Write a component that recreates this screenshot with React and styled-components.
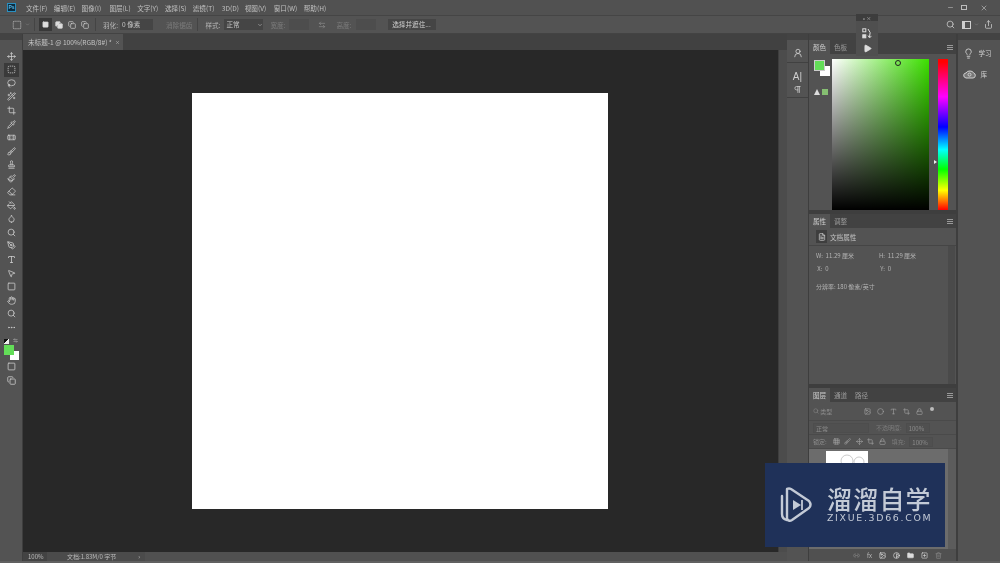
import React from "react";
import styled, { createGlobalStyle } from "styled-components";
import {
  Move, SquareDashed, Lasso, Wand2, Crop, Pipette, Bandage, Brush, Stamp, Paintbrush, Eraser, PaintBucket, Droplet,
  Search, PenTool, Type, MousePointer2, Square, Hand, Ellipsis, Minus, X, Share, ArrowLeftRight, Lightbulb,
  FileText, Lock, Link2, Image, Folder, Trash2, Play, Circle, Grid3x3, Contrast, Copy, UserRound, Pilcrow, ChevronDown, SquarePlus
} from "lucide-react";

const Global = createGlobalStyle`
  html, body { margin: 0; padding: 0; background: #535353; overflow: hidden; }
  #root { width: 1000px; height: 563px; }
  * { box-sizing: border-box; }
`;

const Window = styled.div`
  position: relative;
  width: 1000px;
  height: 563px;
  display: flex;
  flex-direction: column;
  overflow: hidden;
  background: #535353;
  color: #c4c4c4;
  font: 6.6px "Noto Sans CJK SC", "Liberation Sans", sans-serif;
  filter: blur(0.3px);
`;
const MenuBar = styled.div`
  height: 16px;
  flex: none;
  display: flex;
  align-items: center;
  padding: 0 0 0 7px;
  background: #515151;
  border-bottom: 1px solid #454545;
`;
const Logo = styled.div`
  width: 9px;
  height: 9px;
  margin-right: 10px;
  border: 1px solid #2a8fc0;
  background: #0d2c3f;
  color: #58b8e8;
  font: bold 5px "Liberation Sans", sans-serif;
  line-height: 7px;
  text-align: center;
`;
const MenuItem = styled.span`
  width: ${p => p.$w || 27.8}px;
  flex: none;
  white-space: nowrap;
  color: #c0c0c0;
`;
const WindowControls = styled.div`
  margin-left: auto;
  display: flex;
  align-items: center;
  padding-right: 12px;
  color: #bbb;
`;
const MaxBox = styled.div`
  width: 6px;
  height: 5px;
  margin: 0 13px 0 7.5px;
  border: 1px solid #bbb;
`;
const OptionsBar = styled.div`
  height: 18px;
  flex: none;
  display: flex;
  align-items: center;
  padding-left: 12px;
  background: #535353;
  border-bottom: 1px solid #434343;
`;
const ToolCaret = styled.div`
  display: flex;
  margin-left: 3px;
  color: #999;
`;
const Divider = styled.div`
  width: 1px;
  height: 13px;
  flex: none;
  background: #444;
  margin: 0 ${p => p.$m || 5}px;
`;
const ModeButton = styled.div`
  width: 13px;
  height: 13px;
  flex: none;
  display: flex;
  align-items: center;
  justify-content: center;
  background: ${p => (p.$active ? "#383838" : "transparent")};
  color: #d4d4d4;
`;
const Label = styled.span`
  flex: none;
  white-space: nowrap;
  color: ${p => (p.$dim ? "#7c7c7c" : "#b8b8b8")};
  margin-left: ${p => p.$ml || 0}px;
`;
const Field = styled.div`
  width: ${p => p.$w}px;
  height: 11px;
  flex: none;
  margin-left: ${p => p.$ml || 2}px;
  padding-left: 2px;
  line-height: 11px;
  background: ${p => (p.$dim ? "#4d4d4d" : "#454545")};
  color: #c8c8c8;
  display: flex;
  align-items: center;
  justify-content: space-between;
`;
const ActionButton = styled.div`
  margin-left: 12px;
  width: 48px;
  height: 11px;
  line-height: 11px;
  text-align: center;
  background: #454545;
  color: #d0d0d0;
`;
const OptionsRight = styled.div`
  margin-left: auto;
  display: flex;
  align-items: center;
  padding-right: 7px;
  color: #cfcfcf;
`;
const RightIcon = styled.div`
  display: flex;
  margin-left: ${p => p.$ml || 0}px;
`;
const Workspace = styled.div`
  width: 9px;
  height: 8px;
  border: 1px solid #cfcfcf;
  border-left-width: 3px;
`;
const SwapIcon = styled.div`
  display: flex;
  margin-left: 9px;
  color: #8c8c8c;
`;
const Main = styled.div`
  flex: 1;
  min-height: 0;
  display: flex;
`;
const Toolbar = styled.div`
  width: 23px;
  flex: none;
  display: flex;
  flex-direction: column;
  align-items: center;
  background: #535353;
  border-right: 1px solid #3e3e3e;
`;
const Grip = styled.div`
  align-self: stretch;
  height: 6px;
  flex: none;
  margin-bottom: ${p => p.$mb || 0}px;
  background: #434343;
`;
const ToolSlot = styled.div`
  width: 15px;
  height: 13.55px;
  flex: none;
  display: flex;
  align-items: center;
  justify-content: center;
  background: ${p => (p.$active ? "#3a3a3a" : "transparent")};
  color: #d2d2d2;
`;
const Swatches = styled.div`
  position: relative;
  width: 17px;
  height: 25px;
  flex: none;
  margin: 2px 0 -1px 1px;
`;
const DefaultColors = styled.div`
  position: absolute;
  left: 1px;
  top: 3px;
  width: 5px;
  height: 5px;
  background: linear-gradient(135deg, #111 50%, #eee 50%);
`;
const SwapMark = styled.div`
  position: absolute;
  left: 10px;
  top: 2px;
  color: #ccc;
  display: flex;
`;
const Fg = styled.div`
  position: absolute;
  left: 1px;
  top: 9px;
  width: 10px;
  height: 10px;
  background: #63dd58;
  z-index: 1;
`;
const Bg = styled.div`
  position: absolute;
  left: 7px;
  top: 15px;
  width: 9px;
  height: 9px;
  background: #fff;
`;
const Center = styled.div`
  flex: 1;
  min-width: 0;
  display: flex;
  flex-direction: column;
  background: #282828;
`;
const TabStrip = styled.div`
  height: 16px;
  flex: none;
  display: flex;
  background: #414141;
`;
const DocTab = styled.div`
  width: 100px;
  padding: 0 3px 0 5px;
  display: flex;
  align-items: center;
  justify-content: space-between;
  background: #535353;
  color: #c6c6c6;
  white-space: nowrap;
`;
const CanvasRow = styled.div`
  flex: 1;
  min-height: 0;
  display: flex;
`;
const Canvas = styled.div`
  flex: 1;
  display: flex;
  align-items: center;
  justify-content: center;
  background: #282828;
`;
const Paper = styled.div`
  width: 416px;
  height: 416px;
  margin-right: 1px;
  background: #fff;
`;
const VScroll = styled.div`
  width: 9px;
  flex: none;
  background: #4c4c4c;
  border-left: 1px solid #3e3e3e;
`;
const StatusBar = styled.div`
  height: 9px;
  flex: none;
  display: flex;
  align-items: center;
  background: #505050;
  color: #bcbcbc;
  font-size: 6px;
`;
const Zoom = styled.div`
  width: 24px;
  height: 100%;
  padding-left: 5px;
  line-height: 9px;
  background: #434343;
`;
const DocInfo = styled.div`
  width: 98px;
  height: 100%;
  padding-left: 20px;
  line-height: 9px;
  display: flex;
  justify-content: space-between;
  padding-right: 5px;
  background: #4b4b4b;
`;
const BottomEdge = styled.div`
  height: 2px;
  flex: none;
  background: #606060;
`;
const Dock = styled.div`
  width: 213px;
  flex: none;
  display: flex;
  background: #3e3e3e;
`;
const IconColumn = styled.div`
  width: 21px;
  flex: none;
  display: flex;
  flex-direction: column;
  align-items: center;
  margin-right: 1px;
  background: #535353;
`;
const DockIcon = styled.div`
  height: ${p => p.$h || 13}px;
  display: flex;
  align-items: center;
  justify-content: center;
  color: #d0d0d0;
  flex: none;
  font: 10px "Liberation Sans", sans-serif;
`;
const DockGroup = styled.div`
  align-self: stretch;
  display: flex;
  flex-direction: column;
  align-items: center;
  padding: 6px 0 2px;
  border-bottom: 1px solid #414141;
`;
const PanelColumn = styled.div`
  width: 147px;
  flex: none;
  display: flex;
  flex-direction: column;
  gap: 4px;
`;
const Panel = styled.div`
  height: ${p => p.$h}px;
  flex: ${p => (p.$grow ? 1 : "none")};
  display: flex;
  flex-direction: column;
  background: #535353;
  overflow: hidden;
`;
const PanelHead = styled.div`
  height: 14px;
  flex: none;
  display: flex;
  align-items: stretch;
  background: #424242;
  padding-right: 3px;
`;
const PanelTab = styled.div`
  width: ${p => p.$w || 21}px;
  line-height: 14px;
  text-align: center;
  background: ${p => (p.$active ? "#535353" : "transparent")};
  color: ${p => (p.$active ? "#d0d0d0" : "#9a9a9a")};
`;
const PanelMenu = styled.div`
  margin: auto 0 auto auto;
  width: 6px;
  height: 5px;
  border-top: 1px solid #999;
  border-bottom: 1px solid #999;
  background: linear-gradient(#999, #999) center / 100% 1px no-repeat;
`;
const ColorBody = styled.div`
  flex: 1;
  display: flex;
  padding: 5px 7px 3px 5px;
`;
const ColorSide = styled.div`
  width: 19px;
  flex: none;
  display: flex;
  flex-direction: column;
  gap: 13px;
`;
const ColorChips = styled.div`
  position: relative;
  width: 16px;
  height: 17px;
`;
const ChipFg = styled.div`
  position: absolute;
  left: 0;
  top: 1px;
  width: 11px;
  height: 11px;
  background: #63dd58;
  border: 1px solid #ccc;
  z-index: 1;
`;
const ChipBg = styled.div`
  position: absolute;
  right: 0;
  bottom: 0;
  width: 10px;
  height: 10px;
  background: #fff;
`;
const Warning = styled.div`
  display: flex;
  align-items: center;
  gap: 2px;
`;
const Triangle = styled.div`
  width: 0;
  height: 0;
  border-left: 3px solid transparent;
  border-right: 3px solid transparent;
  border-bottom: 6px solid #ddd;
`;
const GamutChip = styled.div`
  width: 6px;
  height: 6px;
  background: #86bf72;
`;
const Spectrum = styled.div`
  position: relative;
  width: 97px;
  height: 151px;
  flex: none;
  margin-left: -1px;
  background: linear-gradient(to top, #000, rgba(0, 0, 0, 0)), linear-gradient(to right, #fff, #3ce000);
`;
const Picker = styled.div`
  position: absolute;
  left: 63px;
  top: 1px;
  width: 6px;
  height: 6px;
  border-radius: 50%;
  border: 1px solid #222;
`;
const HueWrap = styled.div`
  position: relative;
  margin-left: 9px;
  width: 10px;
  height: 151px;
  flex: none;
  background: linear-gradient(to bottom, #f00 2%, #f0f 25%, #00f 45%, #0ff 60%, #0f0 73%, #ff0 87%, #f00 100%);
`;
const HueMark = styled.div`
  position: absolute;
  left: -4px;
  top: 101px;
  width: 0;
  height: 0;
  border-top: 2px solid transparent;
  border-bottom: 2px solid transparent;
  border-left: 3px solid #eee;
`;
const DocRow = styled.div`
  height: 18px;
  flex: none;
  display: flex;
  align-items: center;
  gap: 3px;
  padding-left: 7px;
  border-bottom: 1px solid #454545;
`;
const DocIcon = styled.div`
  width: 11px;
  height: 13px;
  display: flex;
  align-items: center;
  justify-content: center;
  background: #3e3e3e;
  color: #ddd;
`;
const PropsBody = styled.div`
  flex: 1;
  display: flex;
  min-height: 0;
`;
const PropsContent = styled.div`
  flex: 1;
  display: flex;
  flex-direction: column;
  padding: 3px 0 0 7px;
  color: #b4b4b4;
  font-size: 6px;
`;
const PropsRow = styled.div`
  height: 13px;
  display: grid;
  grid-template-columns: 63px 1fr;
  align-items: center;
`;
const Resolution = styled.div`
  margin-top: 7px;
`;
const ThinScroll = styled.div`
  width: 7px;
  flex: none;
  margin-right: 1px;
  background: #4a4a4a;
`;
const LayerRow = styled.div`
  height: ${p => p.$h || 14}px;
  flex: none;
  display: flex;
  align-items: center;
  padding: 0 4px;
  color: #8c8c8c;
  font-size: 6px;
  border-bottom: 1px solid #4a4a4a;
`;
const FilterGap = styled.div`
  display: flex;
  gap: ${p => p.$gap || 4.5}px;
  margin-left: ${p => p.$ml || 0}px;
  color: #a6a6a6;
  align-items: center;
`;
const FilterDot = styled.div`
  width: 4px;
  height: 4px;
  margin: -4px 0 0 7px;
  border-radius: 50%;
  background: #bbb;
`;
const LayerField = styled.div`
  width: ${p => p.$w}px;
  height: 10px;
  margin-left: ${p => p.$ml || 0}px;
  padding-left: 2px;
  line-height: 9px;
  border: 1px solid #4d4d4d;
  background: #505050;
  flex: none;
`;
const LayerList = styled.div`
  flex: 1;
  min-height: 0;
  display: flex;
  background: #636363;
`;
const LayerContent = styled.div`
  flex: 1;
  padding: 2px 0 0 17px;
  background: #6c6c6c;
`;
const Thumb = styled.div`
  width: 42px;
  height: 40px;
  background: #fff;
`;
const LayerScroll = styled.div`
  width: 8px;
  flex: none;
  background: #5c5c5c;
`;
const LayerFoot = styled.div`
  height: 12px;
  flex: none;
  display: flex;
  align-items: center;
  justify-content: flex-end;
  gap: 7px;
  padding-right: 14px;
  color: #bdbdbd;
  font-size: 6px;
  background: #505050;
`;
const LearnGap = styled.div`
  width: 2px;
  flex: none;
  background: #3e3e3e;
`;
const LearnColumn = styled.div`
  width: 43px;
  flex: none;
  display: flex;
  flex-direction: column;
  background: #535353;
`;
const LearnItem = styled.div`
  height: 21px;
  display: flex;
  align-items: center;
  gap: 3px;
  padding-left: 5px;
  color: #d0d0d0;
`;
const Floating = styled.div`
  position: absolute;
  left: 856px;
  top: 14px;
  width: 22px;
  height: 42px;
  display: flex;
  flex-direction: column;
  align-items: center;
  background: #4f4f4f;
  color: #ddd;
  z-index: 3;
`;
const FloatHead = styled.div`
  align-self: stretch;
  height: 7px;
  margin-bottom: 4.5px;
  background: #3d3d3d;
  color: #bbb;
  font-size: 5px;
  line-height: 7px;
  text-align: center;
  flex: none;
`;
const FloatItem = styled.div`
  height: 15px;
  display: flex;
  align-items: center;
  flex: none;
`;
const Badge = styled.div`
  position: absolute;
  left: 765px;
  top: 463px;
  width: 180px;
  height: 84px;
  display: flex;
  align-items: center;
  padding-left: 14px;
  gap: 14px;
  background: #1f3159;
  color: #c3cad6;
  z-index: 4;
`;
const BadgeText = styled.div`
  display: flex;
  flex-direction: column;
  margin-top: -1px;
`;
const BadgeTitle = styled.div`
  font: 500 25px/27px "Noto Sans CJK SC", sans-serif;
  letter-spacing: 1.2px;
  white-space: nowrap;
`;
const BadgeUrl = styled.div`
  font: 400 9.4px/12px "DejaVu Sans", sans-serif;
  letter-spacing: 1.7px;
  white-space: nowrap;
`;

const toolIcons = [Move, SquareDashed, Lasso, Wand2, Crop, Pipette, Bandage, Brush, Stamp, Paintbrush, Eraser, PaintBucket, Droplet, Search, PenTool, Type, MousePointer2, Square, Hand, Search, Ellipsis];
const menus = [["文件(F)"], ["编辑(E)"], ["图像(I)"], ["图层(L)"], ["文字(Y)"], ["选择(S)"], ["滤镜(T)", 29], ["3D(D)", 23], ["视图(V)", 29], ["窗口(W)", 30], ["帮助(H)"]];

export default function App() {
  return (
    <Window>
      <Global />
      <MenuBar>
        <Logo>Ps</Logo>
        {menus.map(([t, w]) => <MenuItem key={t} $w={w}>{t}</MenuItem>)}
        <WindowControls>
          <Minus size={7} />
          <MaxBox />
          <X size={8} />
        </WindowControls>
      </MenuBar>
      <OptionsBar>
        <SquareDashed size={10} color="#c8c8c8" />
        <ToolCaret><ChevronDown size={5} /></ToolCaret>
        <Divider $m={4} />
        <ModeButton $active><Square size={7} fill="#ddd" /></ModeButton>
        <ModeButton><Copy size={8} fill="#ddd" /></ModeButton>
        <ModeButton><Copy size={8} /></ModeButton>
        <ModeButton><Copy size={8} /></ModeButton>
        <Divider $m={4} />
        <Label $ml={3}>羽化:</Label>
        <Field $w={33}>0 像素</Field>
        <Label $dim $ml={13}>消除锯齿</Label>
        <Divider />
        <Label $ml={2}>样式:</Label>
        <Field $w={39} $ml={4}>正常<ChevronDown size={6} /></Field>
        <Label $dim $ml={7}>宽度:</Label>
        <Field $w={20} $dim $ml={4} />
        <SwapIcon><ArrowLeftRight size={8} /></SwapIcon>
        <Label $dim $ml={10}>高度:</Label>
        <Field $w={20} $dim $ml={4} />
        <ActionButton>选择并遮住...</ActionButton>
        <OptionsRight>
          <RightIcon><Search size={9} /></RightIcon>
          <RightIcon $ml={6.5}><Workspace /></RightIcon>
          <RightIcon $ml={3}><ChevronDown size={5} color="#999" /></RightIcon>
          <RightIcon $ml={5.5}><Share size={9} /></RightIcon>
        </OptionsRight>
      </OptionsBar>
      <Main>
        <Toolbar>
          <Grip $mb={9.5} />
          {toolIcons.map((I, i) => (
            <ToolSlot key={i} $active={i === 1}><I size={9} strokeWidth={2} /></ToolSlot>
          ))}
          <Swatches>
            <DefaultColors />
            <SwapMark><ArrowLeftRight size={5} /></SwapMark>
            <Fg /><Bg />
          </Swatches>
          <ToolSlot><Square size={9} /></ToolSlot>
          <ToolSlot><Copy size={9} /></ToolSlot>
        </Toolbar>
        <Center>
          <TabStrip>
            <DocTab>未标题-1 @ 100%(RGB/8#) * <X size={5} /></DocTab>
          </TabStrip>
          <CanvasRow>
            <Canvas><Paper /></Canvas>
            <VScroll />
          </CanvasRow>
          <StatusBar>
            <Zoom>100%</Zoom>
            <DocInfo>文档:1.83M/0 字节<span>›</span></DocInfo>
          </StatusBar>
        </Center>
        <Dock>
          <IconColumn>
            <Grip />
            <DockGroup>
              <DockIcon $h={14}><UserRound size={10} /></DockIcon>
            </DockGroup>
            <DockGroup>
              <DockIcon $h={14}>A|</DockIcon>
              <DockIcon $h={12}><Pilcrow size={9} /></DockIcon>
            </DockGroup>
          </IconColumn>
          <PanelColumn>
            <Panel $h={176}>
              <Grip />
              <PanelHead>
                <PanelTab $active>颜色</PanelTab>
                <PanelTab>色板</PanelTab>
                <PanelMenu />
              </PanelHead>
              <ColorBody>
                <ColorSide>
                  <ColorChips><ChipFg /><ChipBg /></ColorChips>
                  <Warning><Triangle /><GamutChip /></Warning>
                </ColorSide>
                <Spectrum><Picker /></Spectrum>
                <HueWrap><HueMark /></HueWrap>
              </ColorBody>
            </Panel>
            <Panel $h={170}>
              <PanelHead>
                <PanelTab $active>属性</PanelTab>
                <PanelTab>调整</PanelTab>
                <PanelMenu />
              </PanelHead>
              <DocRow>
                <DocIcon><FileText size={8} /></DocIcon>
                文档属性
              </DocRow>
              <PropsBody>
                <PropsContent>
                  <PropsRow><span>W:&nbsp; 11.29 厘米</span><span>H:&nbsp; 11.29 厘米</span></PropsRow>
                  <PropsRow><span>&nbsp;X:&nbsp; 0</span><span>&nbsp;Y:&nbsp; 0</span></PropsRow>
                  <Resolution>分辨率: 180 像素/英寸</Resolution>
                </PropsContent>
                <ThinScroll />
              </PropsBody>
            </Panel>
            <Panel $grow>
              <PanelHead>
                <PanelTab $active>图层</PanelTab>
                <PanelTab>通道</PanelTab>
                <PanelTab>路径</PanelTab>
                <PanelMenu />
              </PanelHead>
              <LayerRow $h={19}>
                <Search size={6} /><span>&nbsp;类型</span>
                <FilterGap $gap={6} $ml={32}>
                  <Image size={7} /><Circle size={7} /><Type size={7} /><Crop size={7} /><Lock size={7} />
                </FilterGap>
                <FilterDot />
              </LayerRow>
              <LayerRow>
                <LayerField $w={56}>正常</LayerField>
                <Label $dim $ml={7}>不透明度:</Label>
                <LayerField $w={24} $ml={4}>100%</LayerField>
              </LayerRow>
              <LayerRow>
                <span>锁定:</span>
                <FilterGap $ml={6}>
                  <Grid3x3 size={7} /><Brush size={7} /><Move size={7} /><Crop size={7} /><Lock size={7} />
                </FilterGap>
                <Label $dim $ml={6}>填充:</Label>
                <LayerField $w={24} $ml={4}>100%</LayerField>
              </LayerRow>
              <LayerList>
                <LayerContent>
                  <Thumb>
                    <svg width="42" height="14" viewBox="0 0 42 14" fill="none" stroke="#b5b5b5" strokeWidth="0.7">
                      <circle cx="21" cy="10" r="6" />
                      <circle cx="33" cy="11" r="5" />
                    </svg>
                  </Thumb>
                </LayerContent>
                <LayerScroll />
              </LayerList>
              <LayerFoot>
                <Link2 size={7} color="#8a8a8a" /><span>fx</span><Image size={7} color="#eee" /><Contrast size={7} color="#eee" /><Folder size={7} fill="#ddd" color="#ddd" /><SquarePlus size={7} color="#ddd" /><Trash2 size={7} color="#8a8a8a" />
              </LayerFoot>
            </Panel>
          </PanelColumn>
          <LearnGap />
          <LearnColumn>
            <Grip $mb={2.5} />
            <LearnItem><Lightbulb size={11} />&nbsp;学习</LearnItem>
            <LearnItem>
              <svg width="13" height="9" viewBox="0 0 13 9" fill="none" stroke="#d0d0d0" strokeWidth="1">
                <path d="M3 8 Q0.5 7.5 0.7 5 Q1 3 3 3 Q4 0.8 7 1 Q10 1 10.5 3 Q12.6 3.5 12.3 5.8 Q12 8 10 8 Z" fill="#777" />
                <circle cx="6.5" cy="4.6" r="1.5" />
              </svg>
              &nbsp;库
            </LearnItem>
          </LearnColumn>
        </Dock>
      </Main>
      <BottomEdge />
      <Floating>
        <FloatHead>« ×</FloatHead>
        <FloatItem>
          <svg width="10" height="11" viewBox="0 0 10 11" fill="none" stroke="#ddd" strokeWidth="1">
            <rect x="0.8" y="0.8" width="3" height="3" />
            <rect x="0.8" y="6.8" width="3" height="3" fill="#ddd" />
            <path d="M6 1 Q9.5 4 7.5 9 M6 7.5 L7.3 9.6 L9.4 8.4" />
          </svg>
        </FloatItem>
        <FloatItem><Play size={9} fill="#ddd" /></FloatItem>
      </Floating>
      <Badge>
        <svg width="34" height="38" viewBox="0 0 34 38" fill="none" stroke="#c3cad6" strokeWidth="2.4">
          <path d="M8 3 L8 33 M3 10 L3 28 Q3 33 8 34" strokeLinecap="round" />
          <path d="M8 3 Q10 2 12 3 L30 15 Q33 19 30 22 L13 34 Q10 36 8 33" strokeLinejoin="round" />
          <path d="M14 14 L22 19 L14 24 Z" fill="#c3cad6" stroke="none" />
          <path d="M23 14 V24" strokeWidth="1.8" />
        </svg>
        <BadgeText>
          <BadgeTitle>溜溜自学</BadgeTitle>
          <BadgeUrl>ZIXUE.3D66.COM</BadgeUrl>
        </BadgeText>
      </Badge>
    </Window>
  );
}
